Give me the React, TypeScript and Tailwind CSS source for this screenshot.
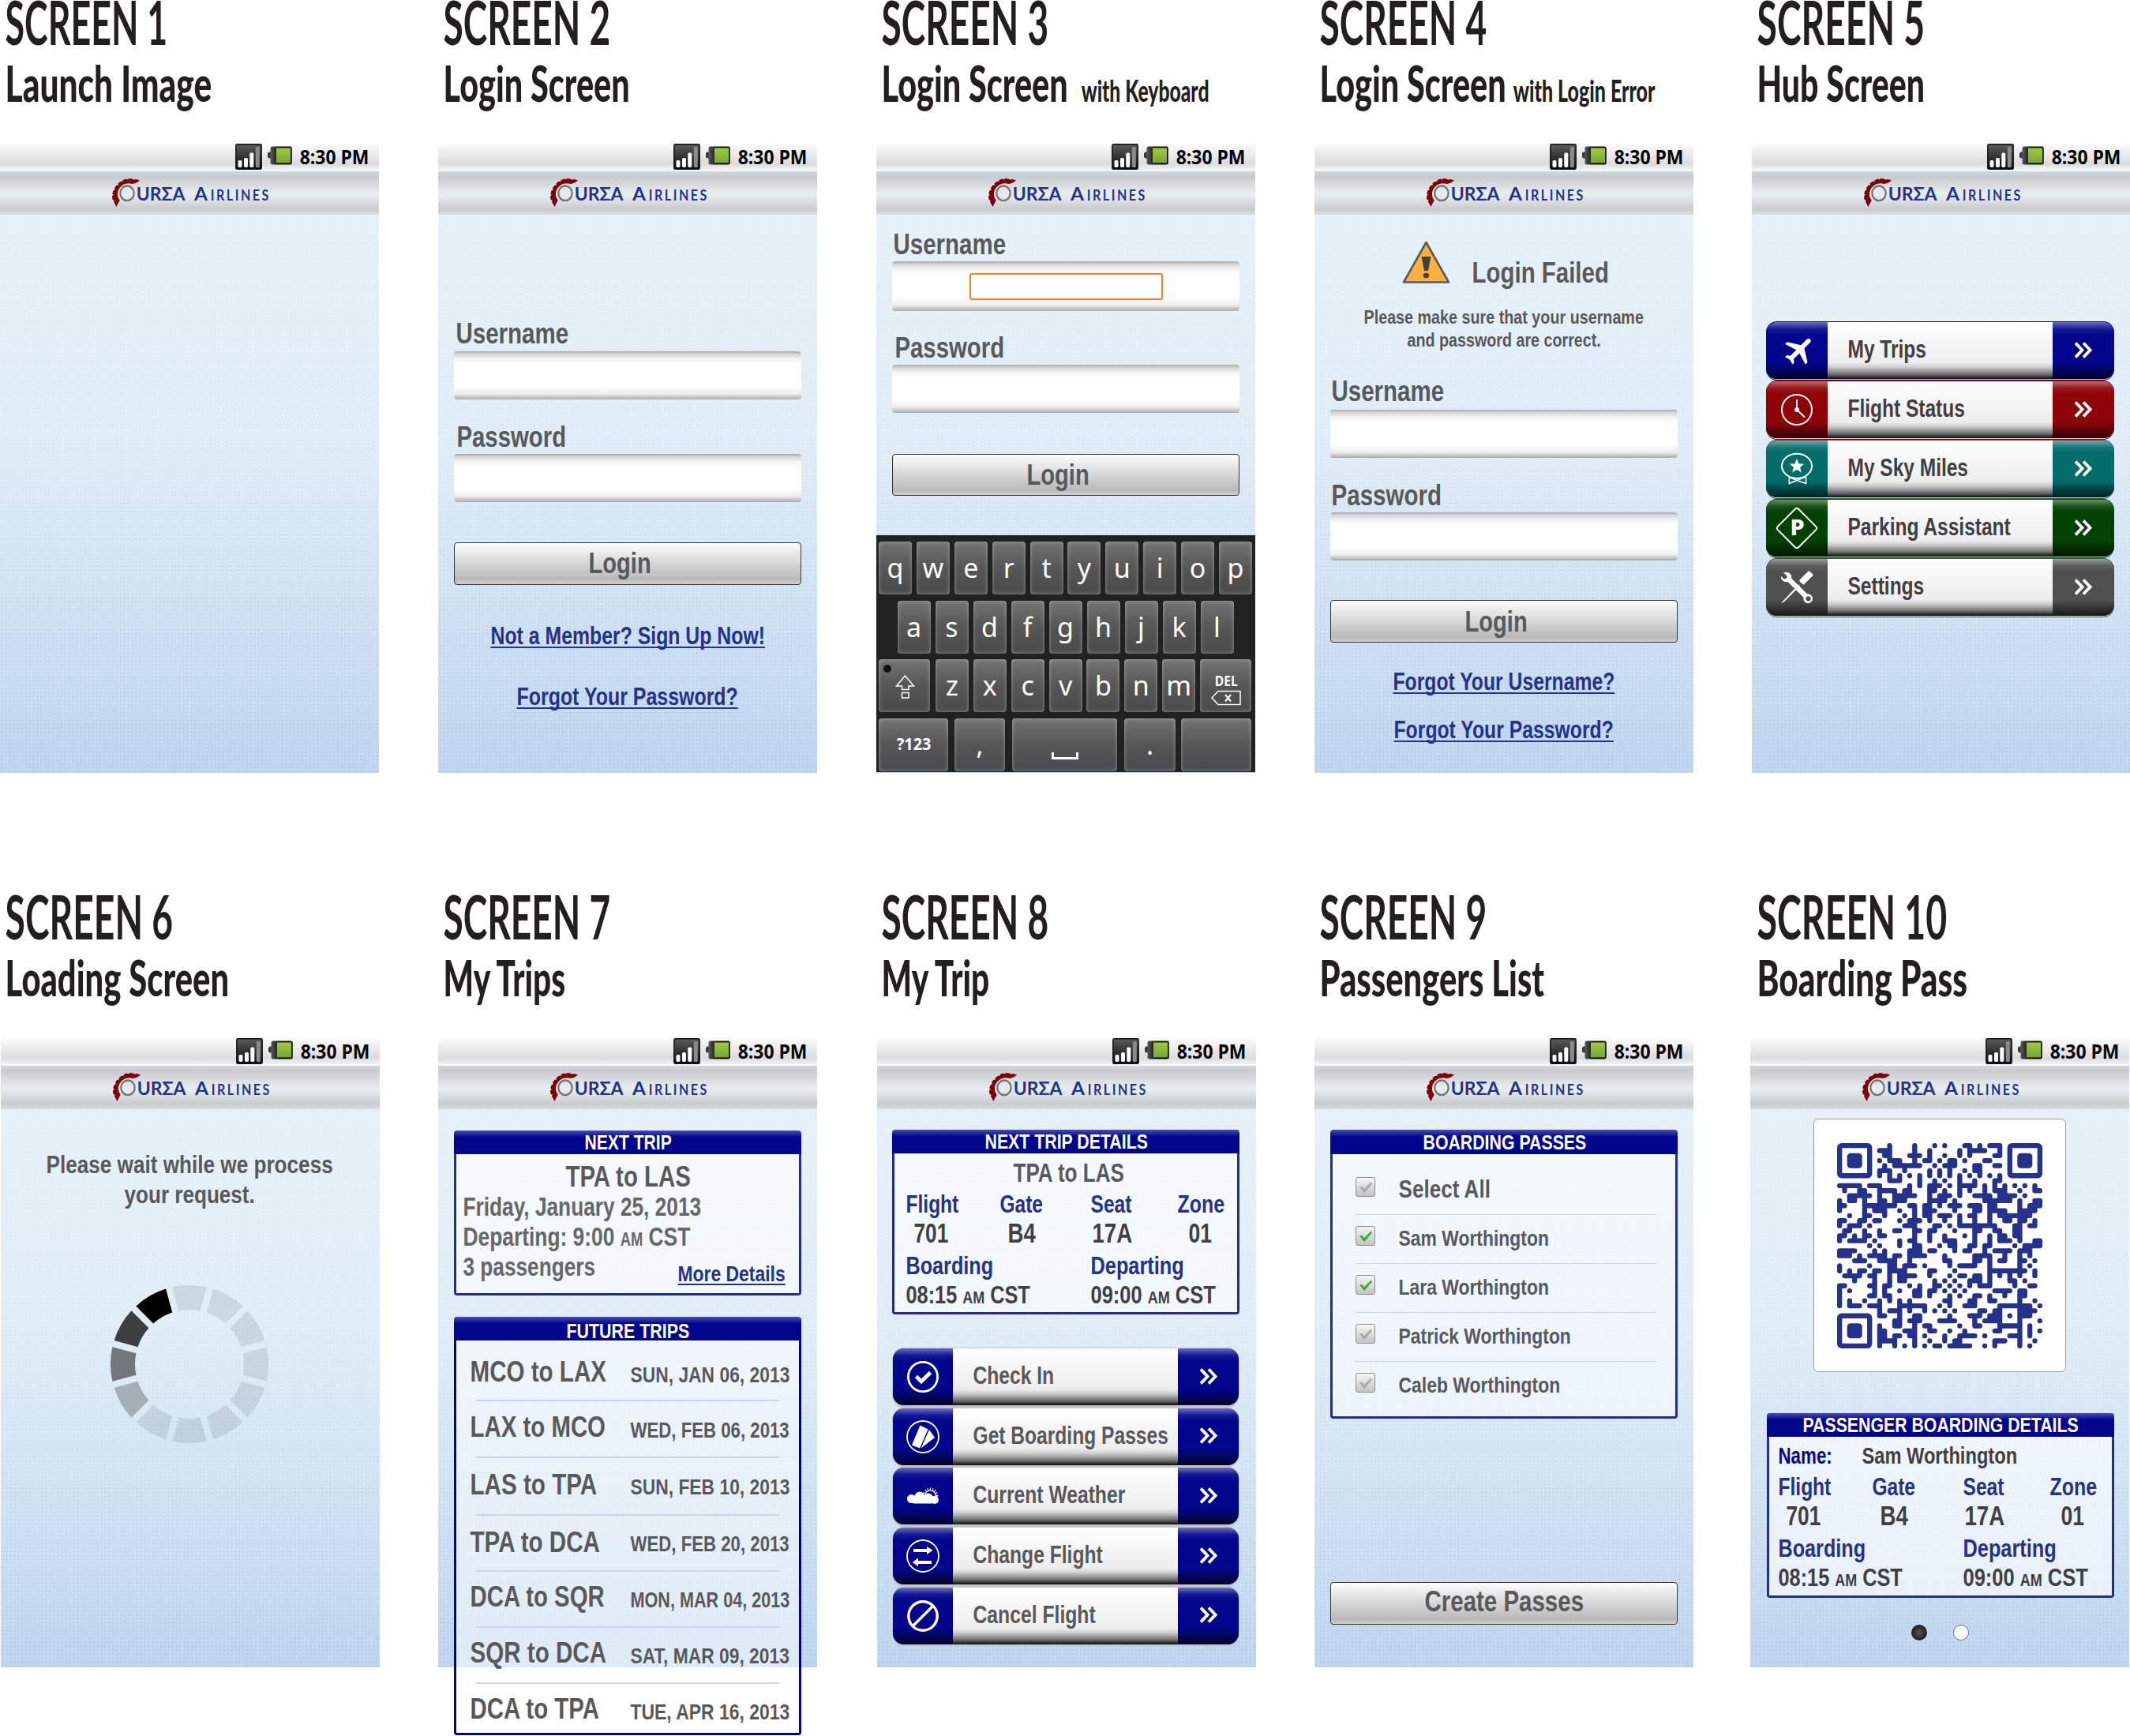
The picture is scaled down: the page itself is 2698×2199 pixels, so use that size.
import { useLayoutEffect, useRef, type ReactNode } from "react";
import { MdFlight } from "react-icons/md";

/* Text condensed horizontally so that it fills exactly `w` pixels. */
function Fit({ w, pad = 1.5, className = "", children }: { w: number; pad?: number; className?: string; children: ReactNode }) {
  const ref = useRef<HTMLSpanElement>(null);
  useLayoutEffect(() => {
    const el = ref.current;
    if (!el) return;
    el.style.transform = `translate(${-pad / 3}px, 1px) scaleX(${(w + pad) / el.offsetWidth})`;
  }, [w, pad]);
  return (
    <div className={`shrink-0 font-bold leading-none ${className}`} style={{ width: w }}>
      <span ref={ref} className="inline-block origin-left align-top whitespace-nowrap">
        {children}
      </span>
    </div>
  );
}

function Signal() {
  return (
    <svg viewBox="0 0 34 33" className="h-[33px] w-[34px]">
      <defs>
        <linearGradient id="sig" x1="0" y1="0" x2="0" y2="1">
          <stop offset="0" stopColor="#5c5c5c" />
          <stop offset="1" stopColor="#0a0a0a" />
        </linearGradient>
      </defs>
      <rect x="0.8" y="0.8" width="32.4" height="31.4" rx="1.5" fill="url(#sig)" stroke="#111" strokeWidth="1.4" />
      <rect x="3.5" y="21" width="5" height="9" rx="1.8" fill="#fff" />
      <rect x="11" y="18" width="5" height="12" rx="1.8" fill="#fff" />
      <rect x="18.3" y="11.5" width="5" height="18.5" rx="1.8" fill="#fff" />
      <rect x="25.8" y="4" width="5" height="26" rx="1.5" fill="#8b8b8b" />
    </svg>
  );
}

function Battery() {
  return (
    <svg viewBox="0 0 31 24" className="h-[24px] w-[31px]">
      <defs>
        <linearGradient id="bat" x1="0" y1="0" x2="0" y2="1">
          <stop offset="0" stopColor="#9ccb3b" />
          <stop offset="1" stopColor="#7ba437" />
        </linearGradient>
        <linearGradient id="cap" x1="0" y1="0" x2="1" y2="0">
          <stop offset="0" stopColor="#5a5a5a" />
          <stop offset="0.35" stopColor="#151515" />
          <stop offset="1" stopColor="#111" />
        </linearGradient>
      </defs>
      <rect x="0" y="7.5" width="7" height="8" rx="2.5" fill="#3a3a3a" />
      <rect x="3.5" y="0.5" width="27.3" height="23" rx="2.5" fill="url(#cap)" />
      <rect x="11" y="2.5" width="18" height="18.8" fill="url(#bat)" />
    </svg>
  );
}

function Logo() {
  return (
    <div className="flex h-[55px] items-start pt-[9px] pl-[142px] font-['Lato'] text-[#25318a]">
      <svg viewBox="0 0 31 36" className="h-[36px] w-[31px] shrink-0 overflow-visible">
        <path
          d="M35 2.2 L29.8 1 L27.6 1.8 L25.6 .4 L21 0 L20 1.6 L17.6 .6 L13.6 1.9 L13.4 4 L11 3.7 L7.6 6.3 L8 8.4 L5.4 8.8 L2.8 12.4 L4 14.1 L1.4 15.4 L.2 19.6 L1.8 20.7 L0 22.6 L.5 27 L2.6 27.4 L2 29.4 L5.4 36 L9.8 27.6 C6.6 24 6 18.4 8.6 13.6 C12 7.6 19 4.8 25.4 7 C29 6.6 33 4.8 35 2.2 Z"
          fill="#7c0309"
        />
        <ellipse cx="19" cy="18.8" rx="8.7" ry="9.3" fill="none" stroke="#6f7673" strokeWidth="2.3" />
      </svg>
      <Fit w={61} pad={1} className="mt-[7px] text-[23px]">URΣA</Fit>
      <Fit w={17} pad={0} className="mt-[7px] ml-[12px] text-[23px]">A</Fit>
      <Fit w={75} pad={1} className="mt-[10px] ml-[4px] text-[19px]"><span className="tracking-[3px]">IRLINES</span></Fit>
    </div>
  );
}

function Phone({ title, titleW, sub, subW, note, noteW = 0, noteGap = "", shift = "", children }: {
  title: string; titleW: number; sub: string; subW: number; note?: string; noteW?: number; noteGap?: string; shift?: string; children?: ReactNode;
}) {
  return (
    <section className="flex h-[1133px] flex-col">
      <div className="-mt-[11px] flex flex-col pl-[7px] font-['Lato'] text-[#231f20]">
        <Fit w={titleW} className="text-[76px]">{title}</Fit>
        <div className="mt-[7px] flex items-start">
          <Fit w={subW} className="text-[63px]"><span className="font-black">{sub}</span></Fit>
          {note && <Fit w={noteW} pad={1} className={`mt-[23px] text-[37px] ${noteGap}`}><span className="font-black">{note}</span></Fit>}
        </div>
      </div>
      <div className={`relative mt-[45px] flex h-[799px] w-[480px] flex-col bg-linear-to-b from-[#eaf2fa] via-[#e0edf7] to-[#c0d6ef] font-['Liberation_Sans'] ${shift}`}>
        <div className="pointer-events-none absolute inset-0 bg-[radial-gradient(rgba(70,105,150,0.3)_0.5px,transparent_1px)] bg-[size:5px_5px] mask-t-from-0%" />
        <div className="relative flex h-[37px] shrink-0 items-start bg-[linear-gradient(#fff,#f0f0f0_30%,#dcdcdc_75%,#fafafa)] pl-[298px]">
          <div className="pt-[2px]"><Signal /></div>
          <div className="pt-[5px] pl-[7px]"><Battery /></div>
          <Fit w={87} pad={1} className="mt-[5px] ml-[10px] font-['Open_Sans'] text-[25px] text-black">8:30 PM</Fit>
        </div>
        <div className="relative h-[55px] shrink-0 bg-[linear-gradient(#d3d7d9,#c8cbce_12%,#e6ebee_48%,#e6ecf0_55%,#c8ccce_88%,#d9dee1)]">
          <Logo />
        </div>
        <div className="relative flex flex-col">{children}</div>
      </div>
    </section>
  );
}

function Field({ className = "", children }: { className?: string; children?: ReactNode }) {
  return (
    <div className={`ml-[20px] flex w-[440px] items-start justify-center rounded-[4px] bg-[linear-gradient(#a9a9a9,#d6d6d6_6%,#f4f4f4_16%,#fff_28%,#fff_72%,#eee_88%,#aaa)] ${className}`}>
      {children}
    </div>
  );
}

function Button({ w, className = "", children }: { w: number; className?: string; children: string }) {
  return (
    <div className={`ml-[20px] flex w-[440px] items-start rounded-[4px] border-[1.5px] border-[#333] bg-[linear-gradient(#fdfdfd,#e2e2e2_35%,#b9b9b9_88%,#d0d0d0)] text-[#58595b] ${className}`}>
      <Fit w={w} className="text-[37px]">{children}</Fit>
    </div>
  );
}

function Link({ w, className = "", children }: { w: number; className?: string; children: string }) {
  return (
    <Fit w={w} className={`text-[#25318a] ${className}`}>
      <span className="underline decoration-2 underline-offset-[3px] [text-decoration-skip-ink:none]">{children}</span>
    </Fit>
  );
}

/* ---------- keyboard ---------- */

function Key({ className = "w-[42px]", children }: { className?: string; children?: ReactNode }) {
  return (
    <div className={`flex h-[67px] shrink-0 justify-center rounded-[4px] bg-linear-to-b from-[#747474] via-[#565656] to-[#4a4a4c] font-['Noto_Sans'] text-[34px] leading-[66px] text-white shadow-[inset_0_0_5px_rgba(255,255,255,0.38)] ${className}`}>
      {children}
    </div>
  );
}

function Keyboard() {
  return (
    <div className="mt-[50px] flex h-[300px] w-[480px] flex-col gap-[7.5px] bg-[#20221f] pt-[8px]">
      <div className="flex gap-[5.9px] pl-[3px]">
        {"qwertyuiop".split("").map((k) => <Key key={k}>{k}</Key>)}
      </div>
      <div className="flex gap-[6px] pl-[26.5px]">
        {"asdfghjkl".split("").map((k) => <Key key={k}>{k}</Key>)}
      </div>
      <div className="flex gap-[5.9px] pl-[3px]">
        <Key className="mr-[1px] w-[65px]">
          <svg viewBox="0 0 65 67" className="h-[67px] w-[65px]" fill="none" stroke="#fff" strokeWidth="1.5">
            <circle cx="11" cy="12" r="5" fill="#111" stroke="none" />
            <path d="M33.5 21 L44.5 34 H38 V38.5 H29.5 V34 H22.5 Z M29.5 42.5 H38 V49 H29.5 Z" />
          </svg>
        </Key>
        {"zxcvbnm".split("").map((k) => <Key key={k}>{k}</Key>)}
        <Key className="w-[65px] flex-col items-center pt-[9px]">
          <Fit w={28} pad={0.5} className="text-[17px]">DEL</Fit>
          <svg viewBox="0 0 38 20" className="mt-[4px] h-[20px] w-[38px]" fill="none" stroke="#fff" strokeWidth="1.5">
            <path d="M1 10 L9 1.5 H37 V18.5 H9 Z" />
            <path d="M18 6 L25 14.5 M25 6 L18 14.5" strokeWidth="2" />
          </svg>
        </Key>
      </div>
      <div className="flex pl-[3px]">
        <Key className="w-[88px] items-start">
          <Fit w={43} pad={0.5} className="mt-[21px] text-[21px]">?123</Fit>
        </Key>
        <Key className="ml-[8px] w-[64px]">,</Key>
        <Key className="ml-[9px] w-[133px]">
          <svg viewBox="0 0 34 10" className="mt-[43px] h-[10px] w-[34px]" fill="none" stroke="#fff" strokeWidth="3">
            <path d="M1.5 0 V7.5 H32.5 V0" />
          </svg>
        </Key>
        <Key className="ml-[9px] w-[65px]">.</Key>
        <Key className="ml-[7px] w-[89px]" />
      </div>
    </div>
  );
}

/* ---------- menu rows ---------- */

const plane = <MdFlight className="ml-[7px] size-[46px] rotate-45" />;
const clock = (
  <g fill="none" stroke="#fff">
    <circle cx="20" cy="20" r="19" strokeWidth="2" />
    <path d="M20 7 V20 L30 29.5" strokeWidth="2" />
    <circle cx="20" cy="20" r="3" fill="#fff" stroke="none" />
  </g>
);
const award = (
  <g fill="none" stroke="#fff" strokeWidth="2">
    <ellipse cx="20" cy="16.3" rx="19" ry="15.6" />
    <path d="M10.3 30.5 V38.5 L20 34.5 L31.5 38.5 V30 M10.3 30.5 L20 34.5 L31.5 30" strokeWidth="1.6" />
    <path d="M20 7 l2.5 6.2 6.8 .5 -5.2 4.3 1.7 6.5 -5.8 -3.6 -5.8 3.6 1.7 -6.5 -5.2 -4.3 6.8 -.5z" fill="#fff" stroke="none" />
  </g>
);
const parking = (
  <g>
    <rect x="1.4" y="1.4" width="37.2" height="37.2" rx="3" transform="rotate(45 20 20)" fill="none" stroke="#fff" strokeWidth="2" />
    <text x="20.5" y="29" textAnchor="middle" fontFamily="Noto Sans" fontWeight="800" fontSize="29" fill="#fff">P</text>
  </g>
);
const tools = (
  <g fill="#fff">
    <path d="M0 40 L22 16.5 L24 18.5 L3 39 Z" />
    <rect x="23" y="3.8" width="18" height="8" rx="1.5" transform="rotate(-45 32 8)" />
    <path d="M3 1.2 L8 6 L6.8 8.6 L4 9.8 L0 6 C-.6 10.5 3.6 14.6 8.6 13 L28.6 33 A5.8 5.8 0 1 0 33.4 28.6 L13 8.6 C14.6 3.6 9 -1 3 1.2 Z M34.6 31.2 A3.2 3.2 0 1 1 34.5 31.2 Z" fillRule="evenodd" />
  </g>
);
const check = (
  <g fill="none" stroke="#fff">
    <circle cx="20" cy="20" r="18.6" strokeWidth="2.8" />
    <path d="M11.5 19.5 L18 26 L29.5 14.5" strokeWidth="4.6" />
  </g>
);
const passes = (
  <g fill="#fff">
    <circle cx="20" cy="20" r="20" fill="none" stroke="#fff" strokeWidth="1.8" />
    <path d="M16.5 5.5 L26.5 10.5 L16 34.5 L6 30.5 Z" />
    <path d="M28 11 L35 21 L17.5 34.5 Z" />
  </g>
);
const weather = (
  <g fill="#fff">
    <circle cx="29.5" cy="19.5" r="8.6" fill="none" stroke="#fff" strokeWidth="2.2" strokeDasharray="1.3 2" />
    <circle cx="29.5" cy="19.5" r="6.6" fill="none" stroke="#fff" strokeWidth="1.3" />
    <circle cx="16" cy="21" r="6.5" />
    <circle cx="27" cy="22" r="5.5" />
    <circle cx="35" cy="25" r="5" />
    <circle cx="5.5" cy="23.5" r="5.5" />
    <rect x="4" y="20" width="32" height="9.5" rx="4.7" />
  </g>
);
const swap = (
  <g fill="#fff">
    <circle cx="20" cy="20" r="20" fill="none" stroke="#fff" strokeWidth="1.8" />
    <path d="M8 11 H25 V8 L32.5 12.8 L25 18 V15 H8 Z" />
    <path d="M31 26 H14 V22.5 L6.8 28 L14 33 V30 H31 Z" />
  </g>
);
const ban = (
  <g fill="none" stroke="#fff" strokeWidth="3.4">
    <circle cx="20" cy="20" r="18.2" />
    <path d="M7.5 32.5 L32.5 7.5" />
  </g>
);

function Svg({ children }: { children: ReactNode }) {
  return <svg viewBox="0 0 40 40" className="size-[40px] overflow-visible">{children}</svg>;
}

function RowFace({ bg, icon, label, w, ink, end = "w-[78px]" }: { bg: string; icon: ReactNode; label: string; w: number; ink: string; end?: string }) {
  const sheen = "bg-[linear-gradient(rgba(255,255,255,0.42),rgba(255,255,255,0.08)_12%,transparent_22%,transparent_72%,rgba(0,0,0,0.7))]";
  return (
    <>
      <div className={`${end} ${bg}`}>
        <div className={`flex h-full items-center justify-center ${sheen}`}>{icon}</div>
      </div>
      <div className={`flex w-[285px] items-start bg-[linear-gradient(#fff,#ededed_72%,#c9c9c9_80%,#6d6d6d_92%,#0c0c0c)] pt-[18px] pl-[26px] ${ink}`}>
        <Fit w={w} className="text-[31px]">{label}</Fit>
      </div>
      <div className={`flex-1 ${bg}`}>
        <div className={`flex h-full items-center justify-center pb-[2px] ${sheen}`}>
          <svg viewBox="0 0 22 21" className="h-[21px] w-[22px]" fill="none" stroke="#fff" strokeWidth="3.9">
            <path d="M1 1.5 L9.5 10.5 L1 19.5 M11 1.5 L19.5 10.5 L11 19.5" />
          </svg>
        </div>
      </div>
    </>
  );
}

const hubRows = [
  { label: "My Trips", w: 98, bg: "bg-[#03068c]", icon: <span className="text-white">{plane}</span> },
  { label: "Flight Status", w: 147, bg: "bg-[#8e0408]", icon: <Svg>{clock}</Svg> },
  { label: "My Sky Miles", w: 151, bg: "bg-[#046c69]", icon: <Svg>{award}</Svg> },
  { label: "Parking Assistant", w: 205, bg: "bg-[#044204]", icon: <Svg>{parking}</Svg> },
  { label: "Settings", w: 95, bg: "bg-[#4e524d]", icon: <Svg>{tools}</Svg> },
];

const tripRows = [
  { label: "Check In", w: 101, icon: check },
  { label: "Get Boarding Passes", w: 246, icon: passes },
  { label: "Current Weather", w: 191, icon: weather },
  { label: "Change Flight", w: 163, icon: swap },
  { label: "Cancel Flight", w: 154, icon: ban },
];

/* ---------- panels ---------- */

function Panel({ title, w, head, edge = "border-[#232f86]", fill = "bg-white/60", className = "", children }: {
  title: string; w: number; head: string; edge?: string; fill?: string; className?: string; children: ReactNode;
}) {
  return (
    <div className={`flex w-[440px] flex-col ${className}`}>
      <div className={`flex shrink-0 justify-center rounded-t-[4px] bg-[linear-gradient(#4a4db0,#1d209a_18%,#03068c_28%)] text-white ${head}`}>
        <Fit w={w} className="text-[26px]">{title}</Fit>
      </div>
      <div className={`flex min-h-0 flex-1 flex-col rounded-b-[4px] border-x-[3px] border-b-[3px] ${edge} ${fill}`}>{children}</div>
    </div>
  );
}

function FlightGrid() {
  return (
    <>
      <div className="flex text-[31px] text-[#25318a]">
        <Fit w={65}>Flight</Fit>
        <Fit w={53} className="ml-[54px]">Gate</Fit>
        <Fit w={50} className="ml-[62px]">Seat</Fit>
        <Fit w={58} className="ml-[60px]">Zone</Fit>
      </div>
      <div className="mt-[3px] flex pl-[10px] text-[35px] text-[#404042]">
        <Fit w={42}>701</Fit>
        <Fit w={34} className="ml-[77px]">B4</Fit>
        <Fit w={49} className="ml-[73px]">17A</Fit>
        <Fit w={28} className="ml-[73px]">01</Fit>
      </div>
      <div className="mt-[9px] flex text-[31px] text-[#25318a]">
        <Fit w={109}>Boarding</Fit>
        <Fit w={117} className="ml-[125px]">Departing</Fit>
      </div>
      <div className="mt-[6px] flex text-[31px] text-[#404042]">
        <Fit w={156}>08:15 <span className="text-[22px]">AM</span> CST</Fit>
        <Fit w={157} className="ml-[78px]">09:00 <span className="text-[22px]">AM</span> CST</Fit>
      </div>
    </>
  );
}

const trips = [
  { a: "MCO to LAX", aw: 171, d: "SUN, JAN 06, 2013", row: "h-[75px] pt-[21px]", off: "mt-[8px]" },
  { a: "LAX to MCO", aw: 170, d: "WED, FEB 06, 2013", row: "h-[70px] pt-[14px]", off: "mt-[8px]" },
  { a: "LAS to TPA", aw: 159, d: "SUN, FEB 10, 2013", row: "h-[71px] pt-[15px]", off: "mt-[7px]" },
  { a: "TPA to DCA", aw: 163, d: "WED, FEB 20, 2013", row: "h-[69px] pt-[15px]", off: "mt-[6px]" },
  { a: "DCA to SQR", aw: 169, d: "MON, MAR 04, 2013", row: "h-[69px] pt-[13px]", off: "mt-[8px]" },
  { a: "SQR to DCA", aw: 171, d: "SAT, MAR 09, 2013", row: "h-[69px] pt-[13px]", off: "mt-[8px]" },
  { a: "DCA to TPA", aw: 162, d: "TUE, APR 16, 2013", row: "h-[60px] pt-[13px]", off: "mt-[8px]" },
];

const people = [
  { n: "Select All", w: 115, on: false, row: "h-[76px] pt-[29px]", text: "-mt-[2px] text-[32px]" },
  { n: "Sam Worthington", w: 189, on: true, row: "h-[61px] pt-[14px]", text: "text-[28.5px]" },
  { n: "Lara Worthington", w: 189, on: true, row: "h-[61px] pt-[14px]", text: "text-[28.5px]" },
  { n: "Patrick Worthington", w: 217, on: false, row: "h-[61px] pt-[14px]", text: "text-[28.5px]" },
  { n: "Caleb Worthington", w: 203, on: false, row: "h-[60px] pt-[14px]", text: "text-[28.5px]" },
];

function Checkbox({ on }: { on: boolean }) {
  return (
    <div className="flex size-[25px] shrink-0 items-center justify-center rounded-[3px] border border-[#8e8e8e] bg-linear-to-b from-[#f6f6f6] to-[#c4c4c4]">
      <svg viewBox="0 0 16 14" className="h-[14px] w-[16px]" fill={on ? "#3fae3f" : "#a9a9a9"}>
        <path d="M0 6.5 L3 5.8 L6 9 L14.5 0.5 L16 2.6 L6.8 13.5 L5 13.2 Z" />
      </svg>
    </div>
  );
}

/* ---------- spinner ---------- */

function Spinner() {
  const tones = ["#000", "#3d3e42", "#72777e", "#a5afb8"];
  const pt = (r: number, deg: number) => {
    const t = (deg * Math.PI) / 180;
    return `${100 + r * Math.sin(t)} ${100 - r * Math.cos(t)}`;
  };
  return (
    <svg viewBox="0 0 200 200" className="mt-[100px] ml-[139px] size-[200px]">
      {Array.from({ length: 12 }, (_, i) => {
        const a = i * 30;
        const tone = i >= 8 ? tones[11 - i] : "rgba(60,70,80,0.13)";
        return <path key={i} fill={tone} d={`M${pt(100, a - 12.6)} A100 100 0 0 1 ${pt(100, a + 12.6)} L${pt(69, a + 11.6)} A69 69 0 0 0 ${pt(69, a - 11.6)} Z`} />;
      })}
    </svg>
  );
}

/* ---------- QR code: dark columns of each of the 41 rows ---------- */

const qrRows = [
  "10 15 19 21 25-26 28 30-32",
  "8-10 15 18 24 26-29 32",
  "9-10 14-16 18 21 24 26 31-32",
  "8 10-12 15 17-18 20 22-23 25 29-30",
  "9 11-16 19 21-23 27-28 31-32",
  "8-10 13 18 20 22 25 27-28",
  "8 10 12 14 16 18 20 22 24 26 28 30 32",
  "10-12 16 19 21 24 27 31-32",
  "0-4 6-8 14 16 18-20 22 24-27 29 31 33 35 37 39",
  "1 4-5 8-11 13-14 18-19 21 24 26 29 31-33 36 39-40",
  "2-6 8 11-15 18 20-22 24 27-30 32-35 37",
  "0 2-3 5 8-9 11-13 18-21 23 29-34 36 39-40",
  "0-1 5-11 14-15 17-18 20 22-24 26-28 30-31 36 38-40",
  "0 5 7-9 12 15 17-19 23 27-28 30-33 36-39",
  "2 5-6 9 13 15 17-18 20-22 24 26-27 30 32-38",
  "0-1 4-5 7-8 12 14-16 18 21 24 27 30 33-34 36-37 39",
  "0 2-4 6 13-15 19-20 22 24-31 35-36 38-39",
  "1-2 5 8 11-12 15-16 18-19 23 27-28 31-32 35-36",
  "0-1 3 5-6 8-9 15 18 21 25 27 30 32-33 35-36",
  "0 2-5 7 12 14-15 18 21-23 27 30 32-34 36 39-40",
  "6 8 12 15-16 20 22-23 26-27 29-30 35 37-40",
  "0-3 7 9 14-16 18-19 23 25-26 29 31-34 36-38",
  "0-2 4 6-9 11-12 14-17 21 27-30 33 36 38",
  "3-5 8-11 14 21-22 27-28 30 32-33 36-37 39",
  "0 6 10-11 13-15 17 22 24-27 30 36 38",
  "0 2 4-5 7-8 10-13 18-19 23 30-37 39",
  "1-4 6-7 10 12-15 18 22 24-25 27-28 30 32 34 36 39",
  "3 7 10 12-13 19 21 23 26-28 30 34-35 37",
  "0-1 6-7 9-10 14 16 19-20 22 24 26 28-30 35 38-39",
  "0 2 7 9 12 15-16 18-19 21 23 25 31-34 36-37",
  "0 6-7 9-10 15-16 18 22 24 27-28 30 33 36-37",
  "0 2 5 8 10 12 14 21-22 26-27 30-31 36 39",
  "0 2-4 6-8 12-17 20 22 25-27 32-38 40",
  "8 10-12 14 17 19 21 23 28-29 31-32 36-39",
  "8-9 12 15-16 22 26-28 30-32 34 36-38",
  "11-12 14-16 20-23 27 29-32 36 40",
  "8 11-12 15 17-18 24 27-28 32-36 38",
  "8-9 13-15 18-19 22 25 31-32 36 38 40",
  "8-9 11-12 14-15 17 21 24-27 29 34-36 38",
  "8-11 15 18 21 23-24 31-33 36 39",
  "8 11 13 15 17 19-20 22-26 29 31 36 38",
];

const qrSet = new Set<string>();
qrRows.forEach((row, y) =>
  row.split(" ").forEach((part) => {
    const [a, b = a] = part.split("-").map(Number);
    for (let x = a; x <= b; x++) qrSet.add(`${x},${y}`);
  }),
);

function QrCode() {
  const shapes: string[] = [];
  qrSet.forEach((key) => {
    const [x, y] = key.split(",").map(Number);
    const right = qrSet.has(`${x + 1},${y}`);
    const down = qrSet.has(`${x},${y + 1}`);
    shapes.push(`M${x} ${y + 0.5}a.5 .5 0 1 1 1 0a.5 .5 0 1 1 -1 0z`);
    if (right) shapes.push(`M${x + 0.5} ${y}h1v1h-1z`);
    if (down) shapes.push(`M${x} ${y + 0.5}h1v1h-1z`);
    if (right && down && qrSet.has(`${x + 1},${y + 1}`)) shapes.push(`M${x + 0.5} ${y + 0.5}h1v1h-1z`);
  });
  return (
    <svg viewBox="0 0 41 41" className="size-[260px]" fill="#25318a">
      <path d={shapes.join("")} />
      {[[0, 0], [34, 0], [0, 34]].map(([x, y]) => (
        <g key={`${x}-${y}`}>
          <rect x={x + 0.5} y={y + 0.5} width="6" height="6" rx="0.4" fill="none" stroke="#25318a" strokeWidth="1" />
          <rect x={x + 2} y={y + 2} width="3" height="3" rx="0.7" />
        </g>
      ))}
    </svg>
  );
}

/* ---------- page ---------- */

export default function App() {
  return (
    <main className="grid h-[2199px] w-[2698px] grid-cols-[555px_555px_555px_554px_479px] grid-rows-[1133px_1133px] overflow-hidden bg-white">
      <Phone title="SCREEN 1" titleW={204} sub="Launch Image" subW={260} />

      <Phone title="SCREEN 2" titleW={210} sub="Login Screen" subW={235}>
        <Fit w={141} className="mt-[132px] ml-[23px] text-[36px] text-[#58595b]">Username</Fit>
        <Field className="mt-[5px] h-[61px]" />
        <Fit w={137} className="mt-[29px] ml-[24px] text-[36px] text-[#58595b]">Password</Fit>
        <Field className="mt-[4px] h-[61px]" />
        <Button w={78} className="mt-[51px] h-[54px] pt-[6px] pl-[170px]">Login</Button>
        <Link w={346} className="mt-[47px] ml-[67px] text-[32px]">Not a Member? Sign Up Now!</Link>
        <Link w={279} className="mt-[45px] ml-[100px] text-[32px]">Forgot Your Password?</Link>
      </Phone>

      <Phone title="SCREEN 3" titleW={210} sub="Login Screen" subW={235} note="with Keyboard" noteW={161} noteGap="ml-[18px]">
        <Fit w={141} className="mt-[19px] ml-[22px] text-[36px] text-[#58595b]">Username</Fit>
        <Field className="mt-[4px] h-[63px] pt-[15px]">
          <div className="h-[34px] w-[245px] rounded-[3px] border-2 border-[#f58220] bg-white" />
        </Field>
        <Fit w={137} className="mt-[28px] ml-[24px] text-[36px] text-[#58595b]">Password</Fit>
        <Field className="mt-[4px] h-[61px]" />
        <Button w={78} className="mt-[52px] h-[53px] pt-[6px] pl-[170px]">Login</Button>
        <Keyboard />
      </Phone>

      <Phone title="SCREEN 4" titleW={210} sub="Login Screen" subW={235} note="with Login Error" noteW={179} noteGap="ml-[10px]">
        <div className="mt-[33px] flex h-[54px] items-start pl-[111px]">
          <svg viewBox="0 0 61 54" className="h-[54px] w-[61px] shrink-0">
            <path d="M30.5 2 L59 52.5 H2 Z" fill="#fbb040" stroke="#58595b" strokeWidth="2.6" strokeLinejoin="round" />
            <path d="M24.5 20 H36.5 L33 38 H28 Z" fill="#414042" />
            <ellipse cx="30.5" cy="44" rx="3.7" ry="3.2" fill="#414042" />
          </svg>
          <Fit w={172} className="mt-[21px] ml-[28px] text-[37px] text-[#58595b]">Login Failed</Fit>
        </div>
        <Fit w={353} className="mt-[30px] ml-[63px] text-[24px] text-[#58595b]">Please make sure that your username</Fit>
        <Fit w={244} className="mt-[5px] ml-[118px] text-[24px] text-[#58595b]">and password are correct.</Fit>
        <Fit w={141} className="mt-[35px] ml-[22px] text-[36px] text-[#58595b]">Username</Fit>
        <Field className="mt-[6px] h-[61px]" />
        <Fit w={138} className="mt-[29px] ml-[22px] text-[36px] text-[#58595b]">Password</Fit>
        <Field className="mt-[4px] h-[61px]" />
        <Button w={78} className="mt-[50px] h-[54px] pt-[7px] pl-[170px]">Login</Button>
        <Link w={279} className="mt-[32px] ml-[100px] text-[32px]">Forgot Your Username?</Link>
        <Link w={277} className="mt-[29px] ml-[101px] text-[32px]">Forgot Your Password?</Link>
      </Phone>

      <Phone title="SCREEN 5" titleW={211} sub="Hub Screen" subW={211}>
        <div className="mt-[135px] ml-[18px] flex w-[441px] flex-col">
          {hubRows.map((r) => (
            <div key={r.label} className={`h-[75px] rounded-[14px] pt-px pb-px ${r.bg}`}>
              <div className="flex h-[73px] overflow-hidden rounded-[14px] border-b border-white/80">
                <RowFace bg={r.bg} icon={r.icon} label={r.label} w={r.w} ink="text-[#404042]" />
              </div>
            </div>
          ))}
        </div>
      </Phone>

      <Phone title="SCREEN 6" titleW={211} sub="Loading Screen" subW={282} shift="ml-px">
        <Fit w={362} className="mt-[53px] ml-[58px] text-[32px] text-[#58595b]">Please wait while we process</Fit>
        <Fit w={164} className="mt-[6px] ml-[157px] text-[32px] text-[#58595b]">your request.</Fit>
        <Spinner />
      </Phone>

      <Phone title="SCREEN 7" titleW={210} sub="My Trips" subW={153}>
        <Panel title="NEXT TRIP" w={109} head="h-[30px] pt-[0.5px]" className="mt-[27px] ml-[20px] h-[209px]">
          <Fit w={157} className="mt-[10px] ml-[139px] text-[36.5px] text-[#58595b]">TPA to LAS</Fit>
          <div className="flex flex-col gap-[5px] pt-[2px] pl-[9px] text-[33px] text-[#666769]">
            <Fit w={300}>Friday, January 25, 2013</Fit>
            <Fit w={286}>Departing: 9:00 <span className="text-[23px]">AM</span> CST</Fit>
            <div className="flex items-start">
              <Fit w={166}>3 passengers</Fit>
              <Link w={135} className="mt-[13px] ml-[106px] text-[27px]">More Details</Link>
            </div>
          </div>
        </Panel>
        <Panel title="FUTURE TRIPS" w={154} head="h-[30px] pt-[4px]" edge="border-[#03068c]" fill="bg-white/50" className="mt-[27px] ml-[20px] h-[530px]">
          {trips.map((t, i) => (
            <div key={t.a} className="flex flex-col">
              <div className={`flex items-start pl-[18px] text-[#58595b] ${t.row}`}>
                <div className="w-[203px]"><Fit w={t.aw} className="text-[36px]">{t.a}</Fit></div>
                <Fit w={200} className={`text-[28px] ${t.off}`}>{t.d}</Fit>
              </div>
              {i < trips.length - 1 && <div className="ml-[25px] h-[2px] w-[384px] bg-[#cbd3eb]" />}
            </div>
          ))}
        </Panel>
      </Phone>

      <Phone title="SCREEN 8" titleW={210} sub="My Trip" subW={135} shift="ml-px">
        <Panel title="NEXT TRIP DETAILS" w={205} head="h-[30px] pt-[1px]" className="mt-[26px] ml-[19px] h-[234px]">
          <Fit w={139} className="mt-[7px] ml-[151px] text-[33px] text-[#58595b]">TPA to LAS</Fit>
          <div className="flex flex-col pt-[8px] pl-[15px]"><FlightGrid /></div>
        </Panel>
        <div className="mt-[42px] ml-[19px] flex w-[440px] flex-col">
          {tripRows.map((r) => (
            <div key={r.label} className="h-[75.7px] rounded-[15px] bg-[#c3c5c6] px-px pt-px">
              <div className="flex h-[72px] overflow-hidden rounded-[14px]">
                <RowFace bg="bg-[#03068c]" icon={<Svg>{r.icon}</Svg>} label={r.label} w={r.w} ink="text-[#58595b]" end="w-[76px]" />
              </div>
            </div>
          ))}
        </div>
      </Phone>

      <Phone title="SCREEN 9" titleW={210} sub="Passengers List" subW={283}>
        <Panel title="BOARDING PASSES" w={205} head="h-[31px] pt-[2px]" fill="bg-white/50" className="mt-[26px] ml-[20px] h-[366px]">
          {people.map((p, i) => (
            <div key={p.n} className="flex flex-col">
              <div className={`flex items-start pl-[29px] text-[#58595b] ${p.row}`}>
                <Checkbox on={p.on} />
                <Fit w={p.w} className={`ml-[30px] ${p.text}`}>{p.n}</Fit>
              </div>
              {i < people.length - 1 && <div className="ml-[29px] h-px w-[381px] bg-[#8a93a8]/35" />}
            </div>
          ))}
        </Panel>
        <Button w={200} className="mt-[207px] h-[54px] pt-[4px] pl-[119px]">Create Passes</Button>
      </Phone>

      <Phone title="SCREEN 10" titleW={239} sub="Boarding Pass" subW={265} shift="-ml-[2px]">
        <div className="mt-[12px] ml-[80px] flex h-[321px] w-[320px] items-center justify-center rounded-[6px] border border-[#9a9c9e] bg-white">
          <QrCode />
        </div>
        <Panel title="PASSENGER BOARDING DETAILS" w={348} head="h-[30px] pt-[1px]" className="mt-[52px] ml-[21px] h-[234px]">
          <div className="flex pt-[9px] pl-[12px] text-[29px]">
            <Fit w={67} className="text-[#03068c]">Name:</Fit>
            <Fit w={195} className="ml-[39px] text-[#404042]">Sam Worthington</Fit>
          </div>
          <div className="flex flex-col pt-[9px] pl-[12px]"><FlightGrid /></div>
        </Panel>
        <div className="mt-[34px] ml-[204px] flex gap-[33px]">
          <div className="size-[20px] rounded-full bg-[radial-gradient(#555,#1c1a1b_75%)]" />
          <div className="size-[20px] rounded-full border border-[#6b7078] bg-white" />
        </div>
      </Phone>
    </main>
  );
}
